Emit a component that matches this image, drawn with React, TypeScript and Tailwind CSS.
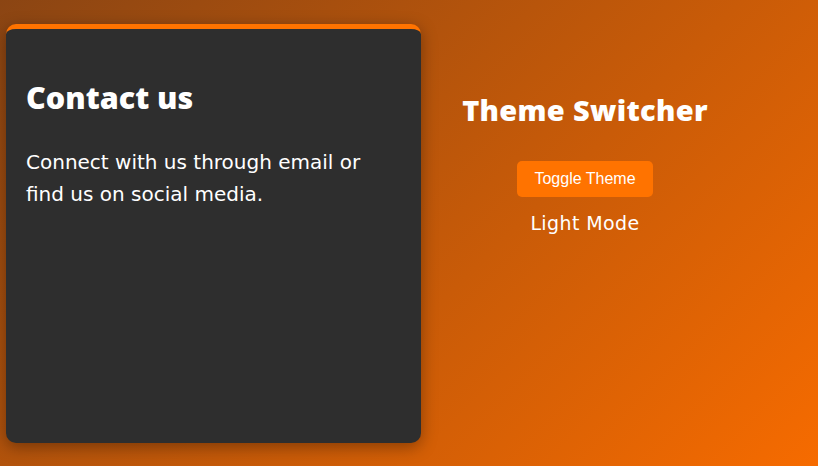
import React from "react";

export default function App() {
  return (
    <div
      className="w-[818px] h-[466px] flex items-center pl-[6px] bg-[linear-gradient(135deg,#8b4513_0%,#f66b00_100%)] overflow-hidden"
      style={{ fontFamily: '"Open Sans", "Noto Sans", sans-serif' }}
    >
      <div className="w-[415px] h-[419px] rounded-[10px] border-t-[5px] border-[#ff7300] bg-[#2e2e2e] shadow-[0_4px_16px_rgba(0,0,0,0.35)] px-[20px] pt-[48px] text-white">
        <h2 className="text-[30.5px] font-extrabold leading-[40px]">Contact us</h2>
        <p
          className="mt-[29px] text-[20px] leading-[32px]"
          style={{ fontFamily: '"DejaVu Sans", "Open Sans", sans-serif' }}
        >
          Connect with us through email or find us on social media.
        </p>
      </div>
      <div className="self-start mt-[88px] ml-[14px] w-[300px] flex flex-col items-center text-white">
        <h2 className="text-[29px] font-extrabold leading-[44px] tracking-[0.3px]">Theme Switcher</h2>
        <button
          className="mt-[29px] h-[36px] px-[17px] rounded-[5px] bg-[#ff7300] text-white text-[16px] leading-[20px]"
          style={{ fontFamily: '"Liberation Sans", Arial, sans-serif' }}
        >
          Toggle Theme
        </button>
        <div
          className="mt-[12px] text-[19px] leading-[28px] tracking-[0.4px]"
          style={{ fontFamily: '"DejaVu Sans", "Open Sans", sans-serif' }}
        >
          Light Mode
        </div>
      </div>
    </div>
  );
}
